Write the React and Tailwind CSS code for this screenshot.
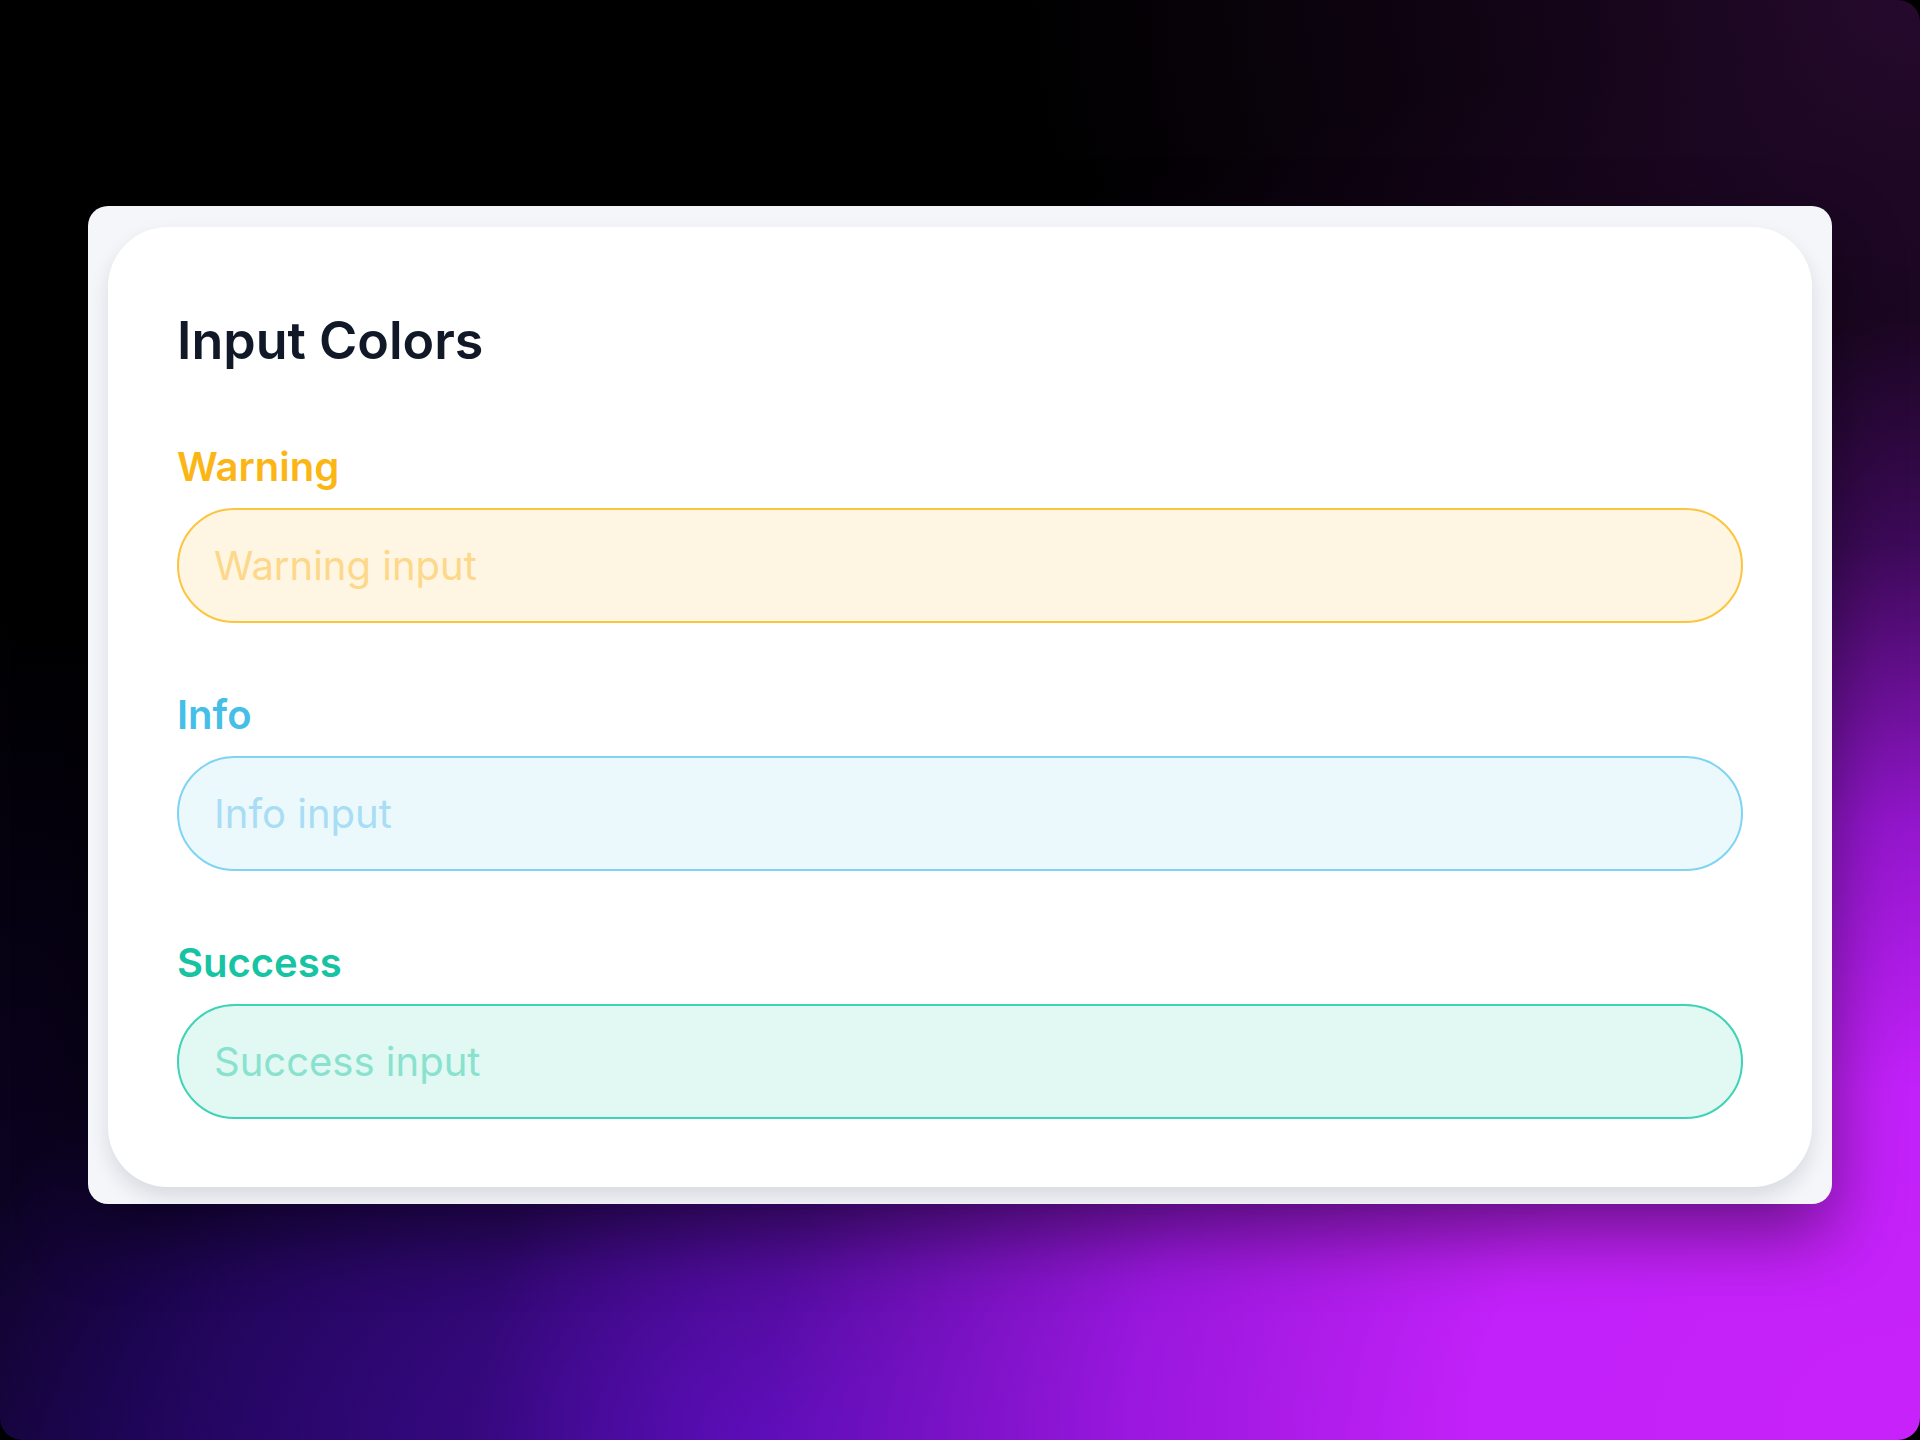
const fields = [
  {
    label: 'Warning',
    placeholder: 'Warning input',
    labelClass: 'text-[#fbb616]',
    inputClass: 'bg-[#fef6e3] border-[#fcc53f] placeholder:text-[#fdd88a]',
  },
  {
    label: 'Info',
    placeholder: 'Info input',
    labelClass: 'text-[#45bee8]',
    inputClass: 'bg-[#ebf9fd] border-[#7fd4f1] placeholder:text-[#a8ddf4]',
  },
  {
    label: 'Success',
    placeholder: 'Success input',
    labelClass: 'text-[#16c3a2]',
    inputClass: 'bg-[#e2f8f3] border-[#3dd3b4] placeholder:text-[#88e2ce]',
  },
];

function ColorField({ field }) {
  return (
    <label className="flex flex-col">
      <span className={`block text-[40px] font-semibold leading-none mb-[21px] ${field.labelClass}`}>
        {field.label}
      </span>
      <input
        type="text"
        placeholder={field.placeholder}
        className={`h-[115px] w-full rounded-full border-2 pl-[35px] pr-8 text-[40px] text-gray-700 outline-none ${field.inputClass}`}
      />
    </label>
  );
}

export default function App() {
  return (
    <div className="bg-black font-['Inter',sans-serif]">
      <div className="h-[1440px] w-[1920px] rounded-[22px] bg-[radial-gradient(ellipse_1800px_1400px_at_100%_100%,#c822fa_0%,#c221f9_25%,rgba(172,26,238,0.85)_44%,rgba(105,16,155,0.55)_64%,rgba(48,10,62,0.32)_80%,transparent_100%),radial-gradient(ellipse_850px_560px_at_40%_100%,#520ae0_0%,rgba(62,8,178,0.6)_50%,transparent_100%),radial-gradient(ellipse_900px_700px_at_100%_0%,#26092e_0%,rgba(30,8,36,0.6)_45%,transparent_100%),linear-gradient(to_bottom,#000_0%,#000_42%,#110430_100%)] px-[88px] pt-[206px]">
        <div className="rounded-[20px] bg-[#f5f6fa] px-5 pt-[21px] pb-[17px] shadow-[0_30px_70px_rgba(0,0,0,0.45)]">
          <div className="rounded-[60px] bg-white px-[69px] pt-[88px] pb-[68px] shadow-[0_10px_20px_rgba(15,23,42,0.12)]">
            <h2 className="mb-[80px] text-[52px] font-semibold leading-none text-[#111827]">Input Colors</h2>
            <div className="flex flex-col gap-[72px]">
              {fields.map((field) => (
                <ColorField key={field.label} field={field} />
              ))}
            </div>
          </div>
        </div>
      </div>
    </div>
  );
}
